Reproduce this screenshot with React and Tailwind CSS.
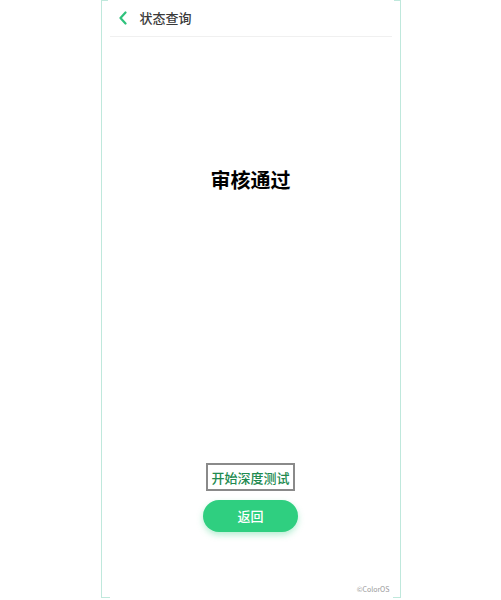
const ChevronLeft = () => (
  <svg width="10" height="14" viewBox="0 0 10 14" fill="none">
    <path d="M7.5 1.5L2.5 7l5 5.5" stroke="#2fc27c" strokeWidth="2.2" strokeLinecap="round" strokeLinejoin="round" />
  </svg>
);

const App = () => {
  return (
    <div
      className="w-[501px] h-[600px] bg-white flex justify-center overflow-hidden"
      style={{ fontFamily: '"Noto Sans CJK SC", "Noto Sans", sans-serif' }}
    >
      <div className="relative w-[300px] h-[598px] border-x border-[#bfe8dc] flex flex-col">
        {/* corner ticks */}
        <div className="absolute left-0 top-0 w-[6px] h-px bg-[#bfe8dc]"></div>
        <div className="absolute right-0 top-0 w-[6px] h-px bg-[#bfe8dc]"></div>
        <div className="absolute left-0 bottom-0 w-[8px] h-px bg-[#bfe8dc]"></div>
        <div className="absolute right-0 bottom-0 w-[7px] h-px bg-[#bfe8dc]"></div>

        <div className="mx-[8px] h-[37px] flex items-center gap-[12px] pl-[8px] border-b border-[#f0f0f0]">
          <ChevronLeft />
          <span className="text-[13px] text-[#3a3a3a] font-medium">状态查询</span>
        </div>

        <div className="flex-1 flex flex-col items-center">
          <h1 className="mt-[129px] text-[20px] font-bold text-black leading-[28px]">审核通过</h1>
          <div className="flex-1"></div>
          <button className="border-2 border-[#8a8a8a] px-[3px] h-[28px] text-[13px] text-[#218a4f] font-medium leading-none">
            开始深度测试
          </button>
          <button className="mt-[9px] w-[95px] h-[32px] rounded-full bg-[#2fcf80] text-white text-[13px] font-medium shadow-[0_3px_6px_rgba(47,207,128,0.35)]">
            返回
          </button>
          <div className="h-[66px] w-full relative">
            <span className="absolute right-[10px] bottom-[4px] text-[7px] text-[#999]">©ColorOS</span>
          </div>
        </div>
      </div>
    </div>
  );
};

export default App;
